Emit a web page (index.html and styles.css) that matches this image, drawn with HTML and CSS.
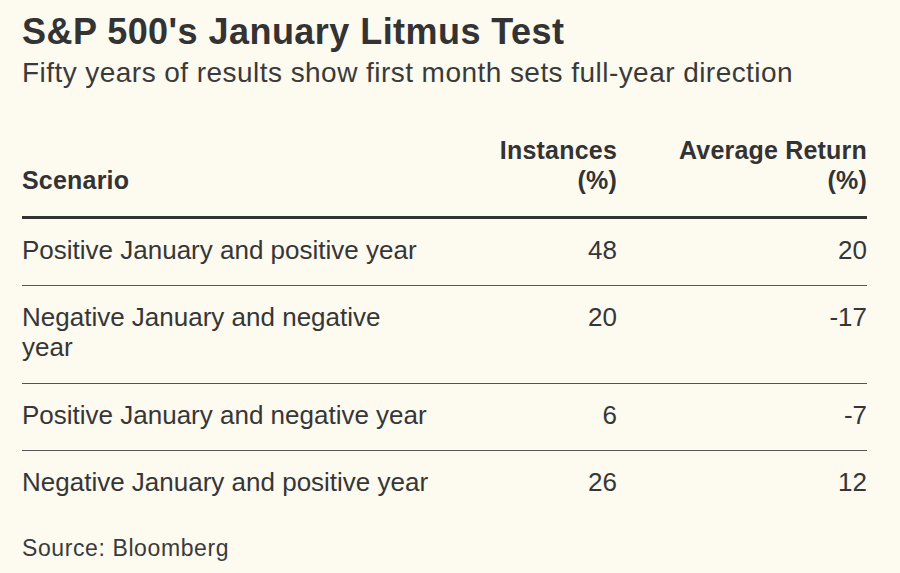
FILE: index.html
```html
<!DOCTYPE html>
<html lang="en">
<head>
<meta charset="utf-8">
<title>S&amp;P 500's January Litmus Test</title>
<link rel="stylesheet" href="styles.css">
</head>
<body>
<main class="page">
  <h1 class="title">S&amp;P 500's January Litmus Test</h1>
  <p class="subtitle">Fifty years of results show first month sets full-year direction</p>
  <table class="data">
    <colgroup>
      <col class="c-scn">
      <col class="c-ins">
      <col class="c-ret">
    </colgroup>
    <thead>
      <tr>
        <th class="left">Scenario</th>
        <th class="num">Instances<br>(%)</th>
        <th class="num">Average Return<br>(%)</th>
      </tr>
    </thead>
    <tbody>
      <tr><td>Positive January and positive year</td><td class="num">48</td><td class="num">20</td></tr>
      <tr><td>Negative January and negative year</td><td class="num">20</td><td class="num">-17</td></tr>
      <tr><td>Positive January and negative year</td><td class="num">6</td><td class="num">-7</td></tr>
      <tr><td>Negative January and positive year</td><td class="num">26</td><td class="num">12</td></tr>
    </tbody>
  </table>
  <p class="source">Source: Bloomberg</p>
</main>
</body>
</html>
```

FILE: styles.css
```css
html, body {
  margin: 0;
  padding: 0;
  background: #fdfaf0;
}
body {
  font-family: "Liberation Sans", Arial, sans-serif;
  color: #363636;
}
.page {
  padding: 12px 0 0 22px;
  width: 845px;
}
.title {
  margin: 0;
  font-size: 36px;
  line-height: 40px;
  font-weight: 700;
  letter-spacing: 0.45px;
  color: #333;
}
.subtitle {
  margin: 4px 0 0;
  font-size: 28px;
  line-height: 34px;
  letter-spacing: 0.45px;
  color: #3a3a3a;
}
.data {
  margin-top: 45px;
  width: 845px;
  border-collapse: collapse;
  table-layout: fixed;
}
.c-scn { width: 410px; }
.c-ins { width: 185px; }
.c-ret { width: 250px; }
.data th {
  font-size: 25px;
  line-height: 30px;
  font-weight: 700;
  letter-spacing: 0.2px;
  color: #333;
  vertical-align: bottom;
  padding: 0 0 21px;
  border-bottom: 3px solid #333;
}
.data td {
  font-size: 26px;
  line-height: 30px;
  vertical-align: top;
  padding: 16px 0 20px;
  border-bottom: 1px solid #555;
}
.data tbody tr:nth-child(2) td {
  padding-bottom: 21px;
}
.data tbody tr:last-child td {
  border-bottom: none;
}
.left { text-align: left; }
.num { text-align: right; }
.source {
  margin: 17px 0 0;
  font-size: 23px;
  line-height: 28px;
  letter-spacing: 0.6px;
  color: #3a3a3a;
}
```
